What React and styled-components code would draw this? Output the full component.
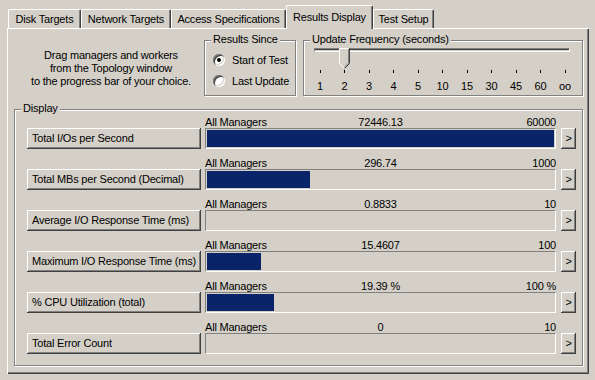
import React from 'react';
import styled, { createGlobalStyle } from 'styled-components';

const GlobalStyle = createGlobalStyle`
  html, body {
    margin: 0;
    padding: 0;
    background: #d4d0c8;
  }
  body {
    font-family: "Liberation Sans", Arial, sans-serif;
    font-size: 11px;
    letter-spacing: -0.2px;
    color: #000;
  }
`;

const tabs = [
  { label: 'Disk Targets', w: 73 },
  { label: 'Network Targets', w: 90 },
  { label: 'Access Specifications', w: 115 },
  { label: 'Results Display', w: 87, active: true },
  { label: 'Test Setup', w: 61 },
];

const freqs = ['1', '2', '3', '4', '5', '10', '15', '30', '45', '60', 'oo'];
const freqIndex = 1;

const meters = [
  { name: 'Total I/Os per Second', value: '72446.13', max: '60000', fill: 1 },
  { name: 'Total MBs per Second (Decimal)', value: '296.74', max: '1000', fill: 0.2967 },
  { name: 'Average I/O Response Time (ms)', value: '0.8833', max: '10', fill: 0 },
  { name: 'Maximum I/O Response Time (ms)', value: '15.4607', max: '100', fill: 0.1546 },
  { name: '% CPU Utilization (total)', value: '19.39 %', max: '100 %', fill: 0.1939 },
  { name: 'Total Error Count', value: '0', max: '10', fill: 0 },
];

export default function App() {
  return (
    <Window>
      <GlobalStyle />
      <TabStrip>
        {tabs.map(t => (
          <Tab key={t.label} $w={t.w} $active={t.active}>{t.label}</Tab>
        ))}
      </TabStrip>
      <Panel>
        <TopRow>
          <Hint>
            Drag managers and workers<br />
            from the Topology window<br />
            to the progress bar of your choice.
          </Hint>
          <Group $w={92} $h={56}>
            <Legend>Results Since</Legend>
            <RadioList>
              <RadioRow><Radio $checked />Start of Test</RadioRow>
              <RadioRow><Radio />Last Update</RadioRow>
            </RadioList>
          </Group>
          <Group $w={280} $h={56} $gap={7}>
            <Legend>Update Frequency (seconds)</Legend>
            <SliderArea>
              <Track />
              <Thumb $left={6 + freqIndex * 24.5 - 5.5}>
                <svg width="11" height="21" viewBox="0 0 11 21">
                  <path d="M0 0H11V15.5L5.5 21L0 15.5Z" fill="#d4d0c8" />
                  <path d="M0.5 15.5V0.5H10" stroke="#fff" fill="none" />
                  <path d="M10.5 0V15.5L5.5 20.5" stroke="#404040" fill="none" />
                  <path d="M9.5 1V15L5.5 19" stroke="#808080" fill="none" />
                  <path d="M0.5 15.5L5 20" stroke="#fff" fill="none" />
                </svg>
              </Thumb>
            </SliderArea>
            <Ticks>
              {freqs.map(f => (
                <TickItem key={f}>
                  <TickMark />
                  <TickLabel>{f}</TickLabel>
                </TickItem>
              ))}
            </Ticks>
          </Group>
        </TopRow>

        <DisplayGroup>
          <Legend>Display</Legend>
          {meters.map(m => (
            <MeterRow key={m.name}>
              <Button>{m.name}</Button>
              <Meter>
                <MeterHead>
                  <span>All Managers</span>
                  <span>{m.value}</span>
                  <MaxValue>{m.max}</MaxValue>
                </MeterHead>
                <Bar>
                  <Fill style={{ width: `${m.fill * 100}%` }} />
                </Bar>
              </Meter>
              <ArrowButton>&gt;</ArrowButton>
            </MeterRow>
          ))}
        </DisplayGroup>
      </Panel>
    </Window>
  );
}

const Window = styled.div`
  width: 595px;
  height: 380px;
  padding-top: 5px;
  box-sizing: border-box;
  overflow: hidden;
`;

const TabStrip = styled.div`
  display: flex;
  align-items: flex-end;
  height: 23px;
  padding-left: 8px;
`;

const Tab = styled.div`
  box-sizing: border-box;
  position: relative;
  z-index: ${p => (p.$active ? 1 : 0)};
  width: ${p => p.$w}px;
  height: ${p => (p.$active ? 24 : 19)}px;
  margin-bottom: ${p => (p.$active ? -1 : 0)}px;
  padding-bottom: ${p => (p.$active ? 2 : 0)}px;
  display: flex;
  align-items: center;
  justify-content: center;
  white-space: nowrap;
  background: #d4d0c8;
  border-top: 1px solid #fff;
  border-left: 1px solid #fff;
  border-right: 1px solid #404040;
  border-radius: 2px 2px 0 0;
  box-shadow: inset -1px 0 #808080;
`;

const Panel = styled.div`
  box-sizing: border-box;
  margin-left: 7px;
  width: 582px;
  height: 346px;
  padding: 12px 0 0 7px;
  box-shadow: inset 1px 1px #fff, inset -1px -1px #404040, inset -2px -2px #808080;
`;

const TopRow = styled.div`
  display: flex;
  height: 56px;
`;

const Hint = styled.div`
  box-sizing: border-box;
  width: 190px;
  padding: 9px 0 0 4px;
  line-height: 13px;
  text-align: center;
`;

const Group = styled.div`
  position: relative;
  box-sizing: border-box;
  width: ${p => p.$w}px;
  height: ${p => p.$h}px;
  margin-left: ${p => p.$gap || 0}px;
  border: 1px solid #808080;
  box-shadow: inset 1px 1px #fff, 1px 1px #fff;
`;

const Legend = styled.span`
  position: absolute;
  top: -8px;
  left: 6px;
  padding: 0 2px;
  line-height: 13px;
  background: #d4d0c8;
  white-space: nowrap;
`;

const RadioList = styled.div`
  display: flex;
  flex-direction: column;
  gap: 8px;
  padding: 12px 0 0 8px;
`;

const RadioRow = styled.div`
  display: flex;
  align-items: center;
  gap: 7px;
  height: 13px;
  white-space: nowrap;
`;

const Radio = styled.span`
  position: relative;
  flex: 0 0 12px;
  width: 12px;
  height: 12px;
  border-radius: 50%;
  background: #fff;
  box-shadow: inset 1px 1px #808080, inset -1px -1px #fff,
    inset 2px 2px #404040, inset -2px -2px #d4d0c8;
  &::after {
    content: '';
    display: ${p => (p.$checked ? 'block' : 'none')};
    position: absolute;
    left: 4px;
    top: 4px;
    width: 4px;
    height: 4px;
    border-radius: 50%;
    background: #000;
  }
`;

const SliderArea = styled.div`
  position: relative;
  width: 256px;
  height: 21px;
  margin: 6px 0 0 10px;
`;

const Track = styled.div`
  box-sizing: border-box;
  height: 4px;
  margin-top: 7px;
  border-top: 1px solid #808080;
  border-left: 1px solid #808080;
  border-bottom: 1px solid #fff;
  border-right: 1px solid #fff;
  box-shadow: inset 0 1px #404040;
`;

const Thumb = styled.div`
  position: absolute;
  top: 0;
  left: ${p => p.$left}px;
  width: 11px;
  height: 21px;
  svg {
    display: block;
  }
`;

const Ticks = styled.div`
  display: flex;
  justify-content: space-between;
  width: 245px;
  margin: 1px 0 0 16px;
`;

const TickItem = styled.div`
  width: 0;
  display: flex;
  flex-direction: column;
  align-items: center;
`;

const TickMark = styled.div`
  flex: 0 0 3px;
  width: 1px;
  background: #000;
`;

const TickLabel = styled.div`
  margin-top: 7px;
  line-height: 13px;
  white-space: nowrap;
`;

const DisplayGroup = styled.div`
  position: relative;
  box-sizing: border-box;
  width: 569px;
  height: 257px;
  margin-top: 13px;
  padding: 6px 6px 0 12px;
  display: flex;
  flex-direction: column;
  gap: 8px;
  border: 1px solid #808080;
  box-shadow: inset 1px 1px #fff, 1px 1px #fff;
`;

const MeterRow = styled.div`
  display: flex;
  align-items: flex-end;
`;

const raised = `
  box-sizing: border-box;
  height: 21px;
  background: #d4d0c8;
  box-shadow: inset -1px -1px #404040, inset 1px 1px #fff, inset -2px -2px #808080;
  display: flex;
  align-items: center;
  white-space: nowrap;
`;

const Button = styled.div`
  ${raised}
  width: 174px;
  margin-right: 4px;
  padding: 0 0 1px 5px;
`;

const ArrowButton = styled.div`
  ${raised}
  width: 15px;
  margin-left: 5px;
  justify-content: center;
  padding-bottom: 1px;
`;

const Meter = styled.div`
  width: 351px;
  display: flex;
  flex-direction: column;
`;

const MeterHead = styled.div`
  display: grid;
  grid-template-columns: 1fr auto 1fr;
  height: 12px;
  line-height: 12px;
  white-space: nowrap;
`;

const MaxValue = styled.span`
  justify-self: end;
`;

const Bar = styled.div`
  box-sizing: border-box;
  height: 21px;
  padding: 1px;
  border-style: solid;
  border-width: 1px;
  border-color: #808080 #fff #fff #808080;
`;

const Fill = styled.div`
  height: 100%;
  background: #0a246a;
`;
